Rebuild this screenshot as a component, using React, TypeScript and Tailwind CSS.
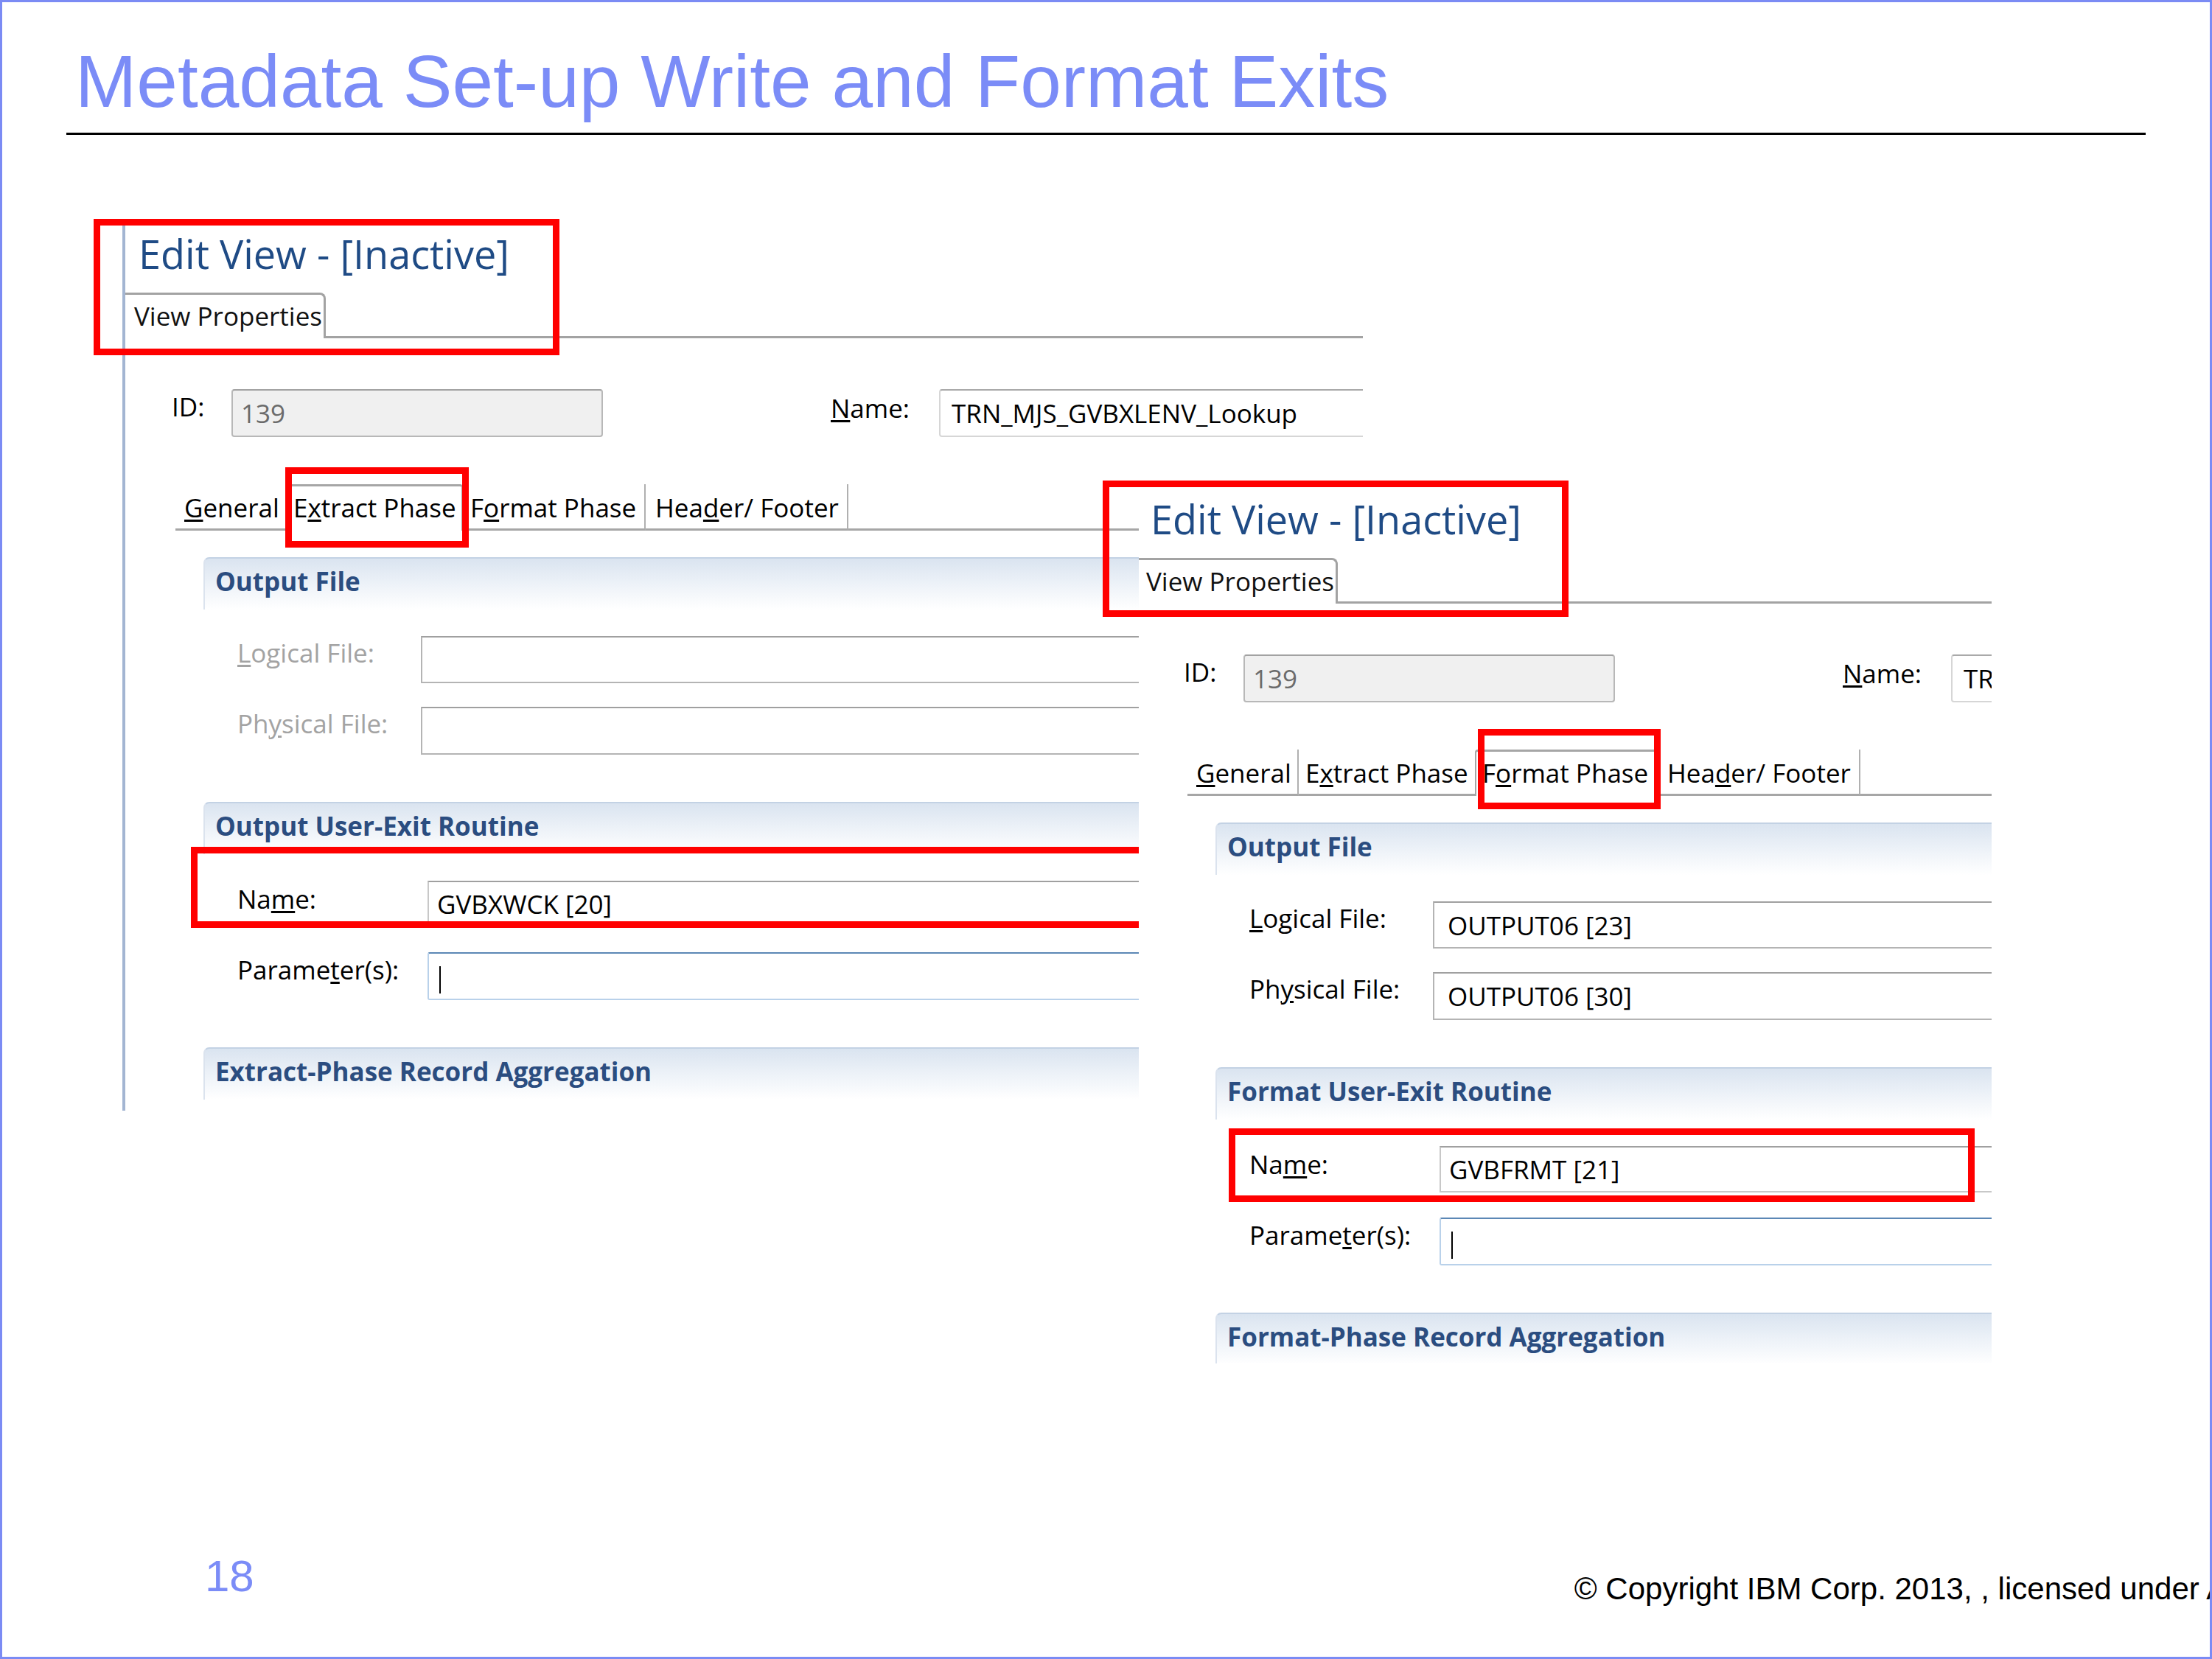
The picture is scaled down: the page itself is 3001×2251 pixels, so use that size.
import React from "react";

function U({ children }: { children: React.ReactNode }) {
  return <span className="underline decoration-[3px] underline-offset-[3px]">{children}</span>;
}

type TabKey = "general" | "extract" | "format" | "header";

const TABS: { key: TabKey; w: string; pl: string; plSel: string; label: React.ReactNode }[] = [
  { key: "general", w: "w-[151px]", pl: "pl-[12px]", plSel: "pl-[10px]", label: <><U>G</U>eneral</> },
  { key: "extract", w: "w-[239px]", pl: "pl-[9px]", plSel: "pl-[7px]", label: <>E<U>x</U>tract Phase</> },
  { key: "format", w: "w-[248px]", pl: "pl-[10px]", plSel: "pl-[8px]", label: <>F<U>o</U>rmat Phase</> },
  { key: "header", w: "w-[275px]", pl: "pl-[13px]", plSel: "pl-[11px]", label: <>Hea<U>d</U>er/ Footer</> },
];

function SectionHeader({ title }: { title: string }) {
  return (
    <div className="ml-[106px] h-[71px] rounded-tl-[8px] border-l-2 border-t-2 border-l-[#dbe3ee] border-t-[#c3d2e4] bg-linear-to-b from-[#dae4f0] via-[#edf2f8] to-white pl-[14px] pt-[13px] text-[35px] font-bold leading-[35px] whitespace-nowrap text-[#2b4d80]">
      {title}
    </div>
  );
}

function EditView(props: {
  selected: TabKey;
  line: boolean;
  w: string;
  enabledFile: boolean;
  logical: string;
  physical: string;
  routineTitle: string;
  routineName: string;
  aggTitle: string;
}) {
  const label = "text-[35px] leading-[35px] whitespace-nowrap";
  const fileLabel = props.enabledFile ? "text-black" : "text-[#a3a3a3]";
  return (
    <div
      className={`${props.w} flex h-full flex-col border-l-4 ${
        props.line ? "border-[#a3b5d2]" : "border-transparent"
      } font-['Open_Sans','Noto_Sans',sans-serif] text-black`}
    >
      {/* title */}
      <div className="ml-[18px] mt-[11px] text-[54px] leading-[54px] whitespace-nowrap text-[#1f4b85]">
        Edit View - [Inactive]
      </div>

      {/* view properties tab */}
      <div className="mt-[26px] flex items-start">
        <div className="h-[62px] w-[272px] shrink-0 rounded-tr-[8px] border-r-[3px] border-t-[3px] border-[#a3a3a3] pl-[12px] pt-[11px] text-[35px] leading-[35px] whitespace-nowrap text-[#111111]">
          View Properties
        </div>
        <div className="h-[62px] flex-1 border-b-[3px] border-[#a3a3a3]" />
      </div>

      {/* ID / Name */}
      <div className="mt-[69px] flex items-start">
        <div className={`ml-[63px] w-[81px] shrink-0 pt-[6px] ${label}`}>ID:</div>
        <div className="flex h-[65px] w-[504px] shrink-0 items-center rounded-[4px] border-2 border-[#b8b8b8] border-t-[#a2a2a2] bg-[#f0f0f0] pl-[11px] text-[35px] leading-[35px] text-[#6b6b6b]">
          139
        </div>
        <div className={`ml-[309px] w-[147px] shrink-0 pt-[8px] ${label}`}>
          <U>N</U>ame:
        </div>
        <div className="flex h-[65px] flex-1 items-center rounded-[4px] border-2 border-[#d6d6d6] border-t-[#a9a9a9] bg-white pl-[15px] text-[35px] leading-[35px] whitespace-nowrap">
          TRN_MJS_GVBXLENV_Lookup
        </div>
      </div>

      {/* phase tabs */}
      <div className="mt-[64px] flex items-start text-[35px] leading-[35px]">
        <div className="h-[63px] w-[68px] shrink-0" />
        {TABS.map((t, i) => {
          const sel = t.key === props.selected;
          const nextSel = TABS[i + 1]?.key === props.selected;
          if (sel) {
            return (
              <div
                key={t.key}
                className={`${t.w} ${t.plSel} h-[63px] shrink-0 rounded-t-[4px] border-x-2 border-t-[3px] border-[#a6a6a6] bg-white pt-[11px] whitespace-nowrap`}
              >
                {t.label}
              </div>
            );
          }
          return (
            <div
              key={t.key}
              className={`${t.w} ${t.pl} h-[63px] shrink-0 border-b-[3px] border-[#a6a6a6] pt-[14px] whitespace-nowrap ${
                nextSel ? "" : "border-r-2 border-r-[#b0b0b0]"
              }`}
            >
              {t.label}
            </div>
          );
        })}
        <div className="h-[63px] flex-1 border-b-[3px] border-[#a6a6a6]" />
      </div>

      {/* Output File */}
      <div className="mt-[36px]">
        <SectionHeader title="Output File" />
      </div>
      <div className="mt-[36px] flex items-start">
        <div className={`ml-[152px] w-[249px] shrink-0 pt-[5px] ${label} ${fileLabel}`}>
          <U>L</U>ogical File:
        </div>
        <div className="flex h-[64px] flex-1 items-center border-2 border-[#b4b4b4] border-t-[#a0a0a0] bg-white pl-[18px] text-[35px] leading-[35px] whitespace-nowrap">
          {props.logical}
        </div>
      </div>
      <div className="mt-[32px] flex items-start">
        <div className={`ml-[152px] w-[249px] shrink-0 pt-[5px] ${label} ${fileLabel}`}>
          Ph<U>y</U>sical File:
        </div>
        <div className="flex h-[65px] flex-1 items-center border-2 border-[#b4b4b4] border-t-[#a0a0a0] bg-white pl-[18px] text-[35px] leading-[35px] whitespace-nowrap">
          {props.physical}
        </div>
      </div>

      {/* User-Exit Routine */}
      <div className="mt-[64px]">
        <SectionHeader title={props.routineTitle} />
      </div>
      <div className="mt-[36px] flex items-start">
        <div className={`ml-[152px] w-[258px] shrink-0 pt-[7px] ${label}`}>
          Na<U>m</U>e:
        </div>
        <div className="flex h-[63px] flex-1 items-center border-2 border-[#c8c8c8] border-t-[#a0a0a0] bg-white pl-[11px] text-[35px] leading-[35px] whitespace-nowrap">
          {props.routineName}
        </div>
      </div>
      <div className="mt-[34px] flex items-start">
        <div className={`ml-[152px] w-[258px] shrink-0 pt-[6px] ${label}`}>
          Parame<U>t</U>er(s):
        </div>
        <div className="h-[65px] flex-1 rounded-[3px] border-2 border-[#b9d1ea] border-t-[#5b87b5] bg-white pl-[14px] pt-[17px]">
          <div className="h-[37px] w-[2px] bg-black" />
        </div>
      </div>

      {/* Aggregation */}
      <div className="mt-[64px]">
        <SectionHeader title={props.aggTitle} />
      </div>
    </div>
  );
}

function RedBox({ cls }: { cls: string }) {
  return <div className={`pointer-events-none absolute border-[9px] border-[#ff0000] ${cls}`} />;
}

export default function App() {
  return (
    <div className="relative h-[2251px] w-[3001px] overflow-hidden border-[3px] border-[#7b8bf4] bg-white">
      <div className="ml-[99px] mt-[57px] font-['Liberation_Sans',Arial,sans-serif] text-[100px] leading-[100px] whitespace-nowrap text-[#7b8cf7]">
        Metadata Set-up Write and Format Exits
      </div>
      <div className="ml-[87px] mt-[20px] h-[3px] w-[2821px] bg-black" />

      {/* left screenshot */}
      <div className="ml-[163px] mt-[123px] h-[1201px] w-[1683px] overflow-hidden">
        <EditView
          selected="extract"
          line={true}
          w="w-[1703px]"
          enabledFile={false}
          logical=""
          physical=""
          routineTitle="Output User-Exit Routine"
          routineName="GVBXWCK [20]"
          aggTitle="Extract-Phase Record Aggregation"
        />
      </div>

      {/* footer */}
      <div className="mt-[593px] flex items-start font-['Liberation_Sans',Arial,sans-serif]">
        <div className="ml-[275px] mt-[9px] shrink-0 text-[60px] leading-[60px] text-[#7b8cf7]">18</div>
        <div className="ml-[1791px] mt-[35px] shrink-0 text-[42px] leading-[42px] whitespace-nowrap text-black">
          © Copyright IBM Corp. 2013, , licensed under Apache License
        </div>
      </div>

      <RedBox cls="left-[124px] top-[294px] h-[185px] w-[632px]" />
      <RedBox cls="left-[384px] top-[631px] h-[109px] w-[249px]" />
      <RedBox cls="left-[256px] top-[1146px] h-[110px] w-[1400px]" />

      {/* right screenshot */}
      <div className="absolute left-[1542px] top-[637px] h-[1210px] w-[1157px] overflow-hidden bg-white">
        <div className="-ml-[6px] mt-[26px]">
          <EditView
            selected="format"
            line={false}
            w="w-[1183px]"
            enabledFile={true}
            logical="OUTPUT06 [23]"
            physical="OUTPUT06 [30]"
            routineTitle="Format User-Exit Routine"
            routineName="GVBFRMT [21]"
            aggTitle="Format-Phase Record Aggregation"
          />
        </div>
      </div>

      <RedBox cls="left-[1493px] top-[649px] h-[185px] w-[632px]" />
      <RedBox cls="left-[2002px] top-[986px] h-[109px] w-[248px]" />
      <RedBox cls="left-[1664px] top-[1528px] h-[100px] w-[1012px]" />
    </div>
  );
}
